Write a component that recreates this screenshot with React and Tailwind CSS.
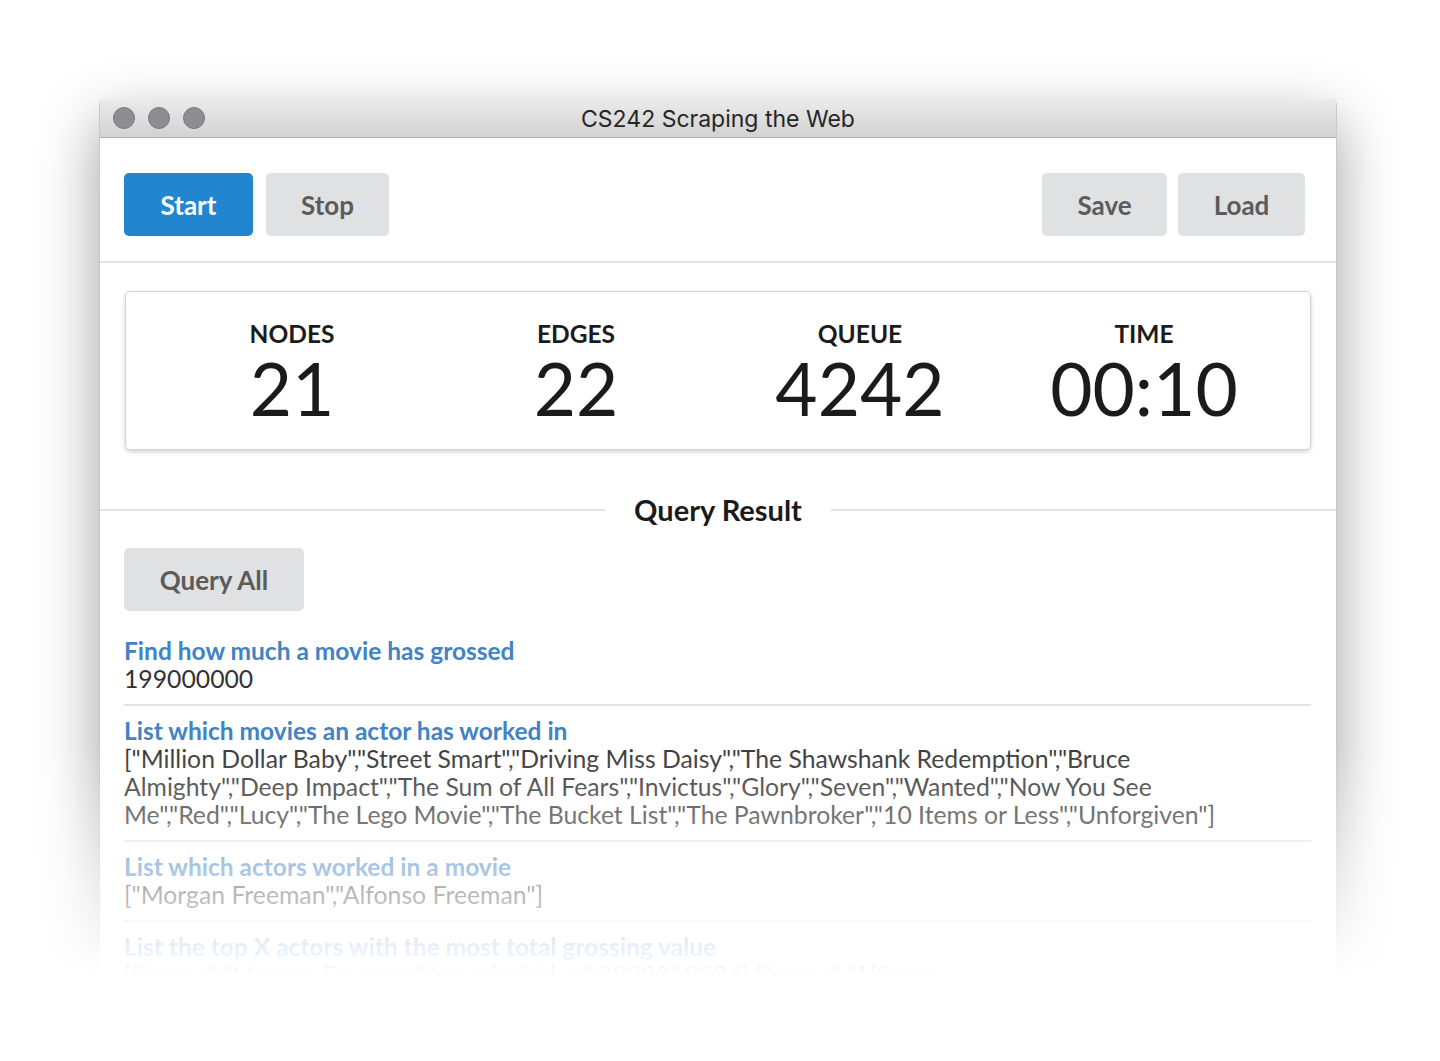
import React from "react";

const lato = { fontFamily: "Lato, 'Noto Sans', sans-serif" };

function Btn({ children, primary, className = "" }) {
  return (
    <button
      className={
        "h-[63px] rounded-[5px] text-[26px] font-bold leading-none " +
        (primary ? "bg-[#2185d0] text-white " : "bg-[#e0e1e2] text-[#5b5b5b] ") +
        className
      }
    >
      {children}
    </button>
  );
}

function Stat({ label, value }) {
  return (
    <div className="flex flex-col items-center">
      <div className="text-[24.5px] font-bold leading-[26px] text-[#1b1b1b]">{label}</div>
      <div className="mt-[4px] text-[73px] leading-[74px] text-[#1b1b1b]">{value}</div>
    </div>
  );
}

function Item({ title, children, last }) {
  return (
    <div className={"pb-[11px] pt-[11px] " + (last ? "" : "border-b-2 border-[#e3e3e3]")}>
      <div className="text-[24.5px] font-bold leading-[28px] text-[#4183c4]">{title}</div>
      <div className="pr-[12px] text-[24.75px] leading-[28px] text-[#333333]">{children}</div>
    </div>
  );
}

const movies =
  '["Million Dollar Baby","Street Smart","Driving Miss Daisy","The Shawshank Redemption","Bruce Almighty","Deep Impact","The Sum of All Fears","Invictus","Glory","Seven","Wanted","Now You See Me","Red","Lucy","The Lego Movie","The Bucket List","The Pawnbroker","10 Items or Less","Unforgiven"]';
const actors = '["Morgan Freeman","Alfonso Freeman"]';
const top =
  '[{"name":"Morgan Freeman","grossingValue":3930318334},{"name":"Alfonso Freeman","grossingValue":120000000}]';

export default function App() {
  return (
    <div className="relative h-[1061px] w-[1440px] overflow-hidden bg-white" style={lato}>
      <div className="pl-[99px] pt-[99px]">
        <div className="h-[960px] w-[1238px] overflow-hidden rounded-t-[6px] border-x border-[#c8c8c8] bg-white shadow-[0_22px_60px_rgba(0,0,0,0.38)]">
          {/* title bar */}
          <div className="relative flex h-[39px] items-center border-b border-[#b3b3b3] bg-gradient-to-b from-[#ebebeb] to-[#d2d2d2] px-[13px]">
            <div className="flex gap-[13px]">
              <div className="h-[22px] w-[22px] rounded-full border border-[#77767a] bg-[#8e8d92]" />
              <div className="h-[22px] w-[22px] rounded-full border border-[#77767a] bg-[#8e8d92]" />
              <div className="h-[22px] w-[22px] rounded-full border border-[#77767a] bg-[#8e8d92]" />
            </div>
            <div
              className="absolute inset-0 flex items-center justify-center pt-[3px] text-[23px] text-[#262626]"
              style={{ fontFamily: "Inter, 'Liberation Sans', sans-serif" }}
            >
              CS242 Scraping the Web
            </div>
          </div>

          {/* toolbar */}
          <div className="flex items-center justify-between border-b-2 border-[#e2e2e2] pb-[25px] pl-[24px] pr-[31px] pt-[35px]">
            <div className="flex gap-[13px]">
              <Btn primary className="w-[129px]">Start</Btn>
              <Btn className="w-[123px]">Stop</Btn>
            </div>
            <div className="flex gap-[11px]">
              <Btn className="w-[125px]">Save</Btn>
              <Btn className="w-[127px]">Load</Btn>
            </div>
          </div>

          <div className="px-[25px] pt-[28px]">
            <div className="grid h-[159px] grid-cols-4 rounded-[5px] border border-[#d4d4d5] px-[24px] pt-[29px] shadow-[0_2px_4px_rgba(0,0,0,0.18)]">
              <Stat label="NODES" value="21" />
              <Stat label="EDGES" value="22" />
              <Stat label="QUEUE" value="4242" />
              <Stat label="TIME" value="00:10" />
            </div>
          </div>

          {/* header */}
          <div className="mt-[44px] flex items-center">
            <div className="h-[2px] flex-1 bg-[#e3e3e3]" />
            <div className="px-[29px] text-[29px] font-bold leading-[32px] text-[#1b1b1b]">Query Result</div>
            <div className="h-[2px] flex-1 bg-[#e3e3e3]" />
          </div>

          <div className="px-[24px] pt-[22px]">
            <Btn className="w-[180px]">Query All</Btn>
            <div className="mr-[1px] mt-[15px]">
              <Item title="Find how much a movie has grossed">199000000</Item>
              <Item title="List which movies an actor has worked in">{movies}</Item>
              <Item title="List which actors worked in a movie">{actors}</Item>
              <Item title="List the top X actors with the most total grossing value" last>
                {top}
              </Item>
            </div>
          </div>
        </div>
      </div>

      {/* fade overlay */}
      <div className="pointer-events-none absolute left-0 right-0 top-[740px] h-[236px] bg-gradient-to-b from-white/0 to-white" />
      <div className="pointer-events-none absolute bottom-0 left-0 right-0 top-[975px] bg-white" />
    </div>
  );
}
